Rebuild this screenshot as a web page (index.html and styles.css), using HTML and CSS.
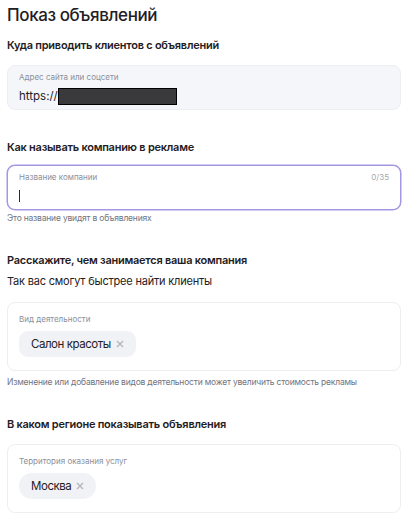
FILE: index.html
```html
<!DOCTYPE html>
<html lang="ru">
<head>
<meta charset="utf-8">
<title>Показ объявлений</title>
<link rel="stylesheet" href="styles.css">
</head>
<body>
<main class="page">
  <h1 class="title">Показ объявлений</h1>

  <h2 class="heading h-first">Куда приводить клиентов с объявлений</h2>
  <div class="field field-filled">
    <div class="label">Адрес сайта или соцсети</div>
    <div class="value">https://<span class="redact"></span></div>
  </div>

  <h2 class="heading h-next">Как называть компанию в рекламе</h2>
  <div class="field field-focus">
    <div class="label-row"><span class="label">Название компании</span><span class="counter">0/35</span></div>
    <div class="value"><span class="caret"></span></div>
  </div>
  <p class="hint hint-tight">Это название увидят в объявлениях</p>

  <h2 class="heading h-after-hint">Расскажите, чем занимается ваша компания</h2>
  <p class="sub">Так вас смогут быстрее найти клиенты</p>
  <div class="field field-chips">
    <div class="label">Вид деятельности</div>
    <div class="chips">
      <span class="chip">Салон красоты<svg class="chip-x" viewBox="0 0 8 8" width="8" height="8" aria-hidden="true"><path d="M1 1L7 7M7 1L1 7"/></svg></span>
    </div>
  </div>
  <p class="hint hint-loose">Изменение или добавление видов деятельности может увеличить стоимость рекламы</p>

  <h2 class="heading h-after-hint">В каком регионе показывать объявления</h2>
  <div class="field field-chips field-region">
    <div class="label">Территория оказания услуг</div>
    <div class="chips">
      <span class="chip chip-round">Москва<svg class="chip-x" viewBox="0 0 8 8" width="8" height="8" aria-hidden="true"><path d="M1 1L7 7M7 1L1 7"/></svg></span>
    </div>
  </div>
</main>
</body>
</html>
```

FILE: styles.css
```css
* { box-sizing: border-box; }
html, body { margin: 0; padding: 0; background: #ffffff; }
body {
  font-family: Inter, "Noto Sans", "Liberation Sans", sans-serif;
  color: #1f2024;
}
.page { padding: 5px 7px 0 7px; width: 408px; }
.title {
  margin: 0;
  font-size: 17px;
  line-height: 20px;
  font-weight: 500;
  letter-spacing: -0.4px;
}
.heading {
  margin: 0;
  font-size: 11px;
  line-height: 16px;
  font-weight: 600;
  letter-spacing: -0.25px;
}
.h-first { margin-top: 12px; }
.h-next { margin-top: 29px; }
.h-after-hint { margin-top: 28px; }
.field {
  border: 1px solid #eceef2;
  border-radius: 8px;
  padding: 6px 11px 5px 11px;
  background: #ffffff;
}
.field-filled { background: #f5f6f9; margin-top: 12px; }
.field-focus { border-color: #a596e2; margin-top: 10px; box-shadow: 0 0 0 0.5px #a596e2; }
.field-chips { margin-top: 13px; padding: 11px 11px 13px 11px; }
.field-region { margin-top: 12px; }
.label-row { display: flex; justify-content: space-between; align-items: center; }
.label {
  font-size: 8px;
  line-height: 10px;
  color: #8b8f9a;
}
.counter { font-size: 8px; line-height: 10px; color: #a4a7b0; }
.value {
  margin-top: 6px;
  height: 16px;
  font-size: 11.5px;
  line-height: 16px;
  display: flex;
  align-items: center;
}
.redact {
  display: inline-block;
  width: 119px;
  height: 17px;
  background: #3a3a3c;
  border: 1.5px solid #000;
}
.caret {
  display: inline-block;
  width: 1px;
  height: 12px;
  background: #2a2b30;
}
.hint {
  margin: 2px 0 0 0;
  font-size: 8.5px;
  line-height: 12px;
  color: #70747f;
  letter-spacing: -0.2px;
}
.hint-loose { margin-top: 5px; }
.sub {
  margin: 5px 0 0 0;
  font-size: 11px;
  line-height: 16px;
  color: #1f2024;
  letter-spacing: -0.2px;
}
.chips { margin-top: 7px; display: flex; gap: 6px; }
.chip {
  display: inline-flex;
  align-items: center;
  height: 26px;
  padding: 0 12px 0 12px;
  border-radius: 9px;
  background: #f1f2f6;
  font-size: 11.5px;
  letter-spacing: -0.45px;
  color: #1f2024;
}
.chip-round { border-radius: 13px; }
.chip-x {
  margin-left: 5px;
  stroke: #b0b3ba;
  stroke-width: 1.2;
  fill: none;
}
```
